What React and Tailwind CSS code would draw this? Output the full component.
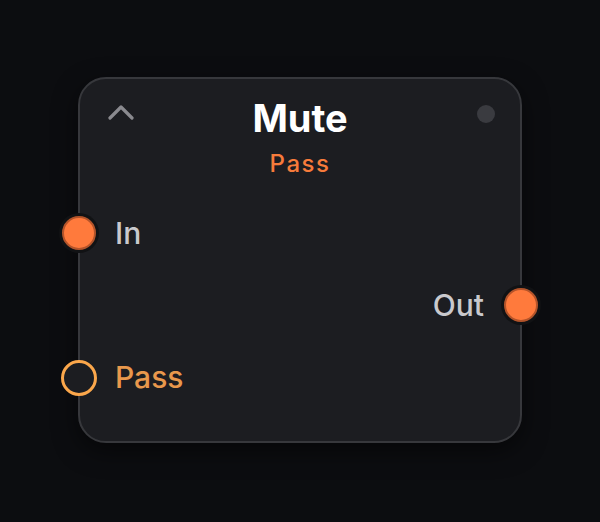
import React from "react";

export default function App() {
  return (
    <div className="w-[600px] h-[522px] bg-[#0c0d10] relative" style={{ fontFamily: "Inter, 'Noto Sans', sans-serif" }}>
      <div className="absolute left-[78px] top-[77px] w-[444px] h-[366px] rounded-[28px] border-2 border-[#37383c] bg-[#1c1d21] shadow-[0_8px_24px_rgba(0,0,0,0.5)]">
        <div className="relative flex flex-col items-center pt-[17px]">
          <svg className="absolute left-[27px] top-[26px]" width="28" height="16" viewBox="0 0 28 16">
            <polyline points="3,13 14,2 25,13" fill="none" stroke="#8a8a8f" strokeWidth="3.2" strokeLinecap="round" strokeLinejoin="round" />
          </svg>
          <div className="absolute right-[25px] top-[26px] w-[18px] h-[18px] rounded-full bg-[#3a3b40]" />
          <div className="text-[38px] leading-[44px] font-bold text-white">Mute</div>
          <div className="mt-[8px] text-[24px] leading-[32px] font-medium tracking-[1.5px] text-[#f77b3b]">Pass</div>
        </div>
        <div className="mt-[17px] flex flex-col">
          <div className="relative h-[72px] flex items-center pl-[35px]">
            <div className="absolute left-[-21px] top-[16px] w-[40px] h-[40px] rounded-full bg-[#111214] flex items-center justify-center">
              <div className="w-[34px] h-[34px] rounded-full bg-[#ff7a3c] border-2 border-[#b4542a]" />
            </div>
            <span className="text-[30px] font-medium text-[#c9c9cd]">In</span>
          </div>
          <div className="relative h-[72px] flex items-center justify-end pr-[36px]">
            <span className="text-[30px] font-medium text-[#c9c9cd]">Out</span>
            <div className="absolute right-[-21px] top-[16px] w-[40px] h-[40px] rounded-full bg-[#111214] flex items-center justify-center">
              <div className="w-[34px] h-[34px] rounded-full bg-[#ff7a3c] border-2 border-[#b4542a]" />
            </div>
          </div>
          <div className="relative h-[72px] flex items-center pl-[35px]">
            <div className="absolute left-[-19px] top-[19px] w-[36px] h-[36px] rounded-full bg-[#1c1d21] border-[3.5px] border-[#fba74b]" />
            <span className="text-[30px] font-medium text-[#e9984c]">Pass</span>
          </div>
        </div>
      </div>
    </div>
  );
}
